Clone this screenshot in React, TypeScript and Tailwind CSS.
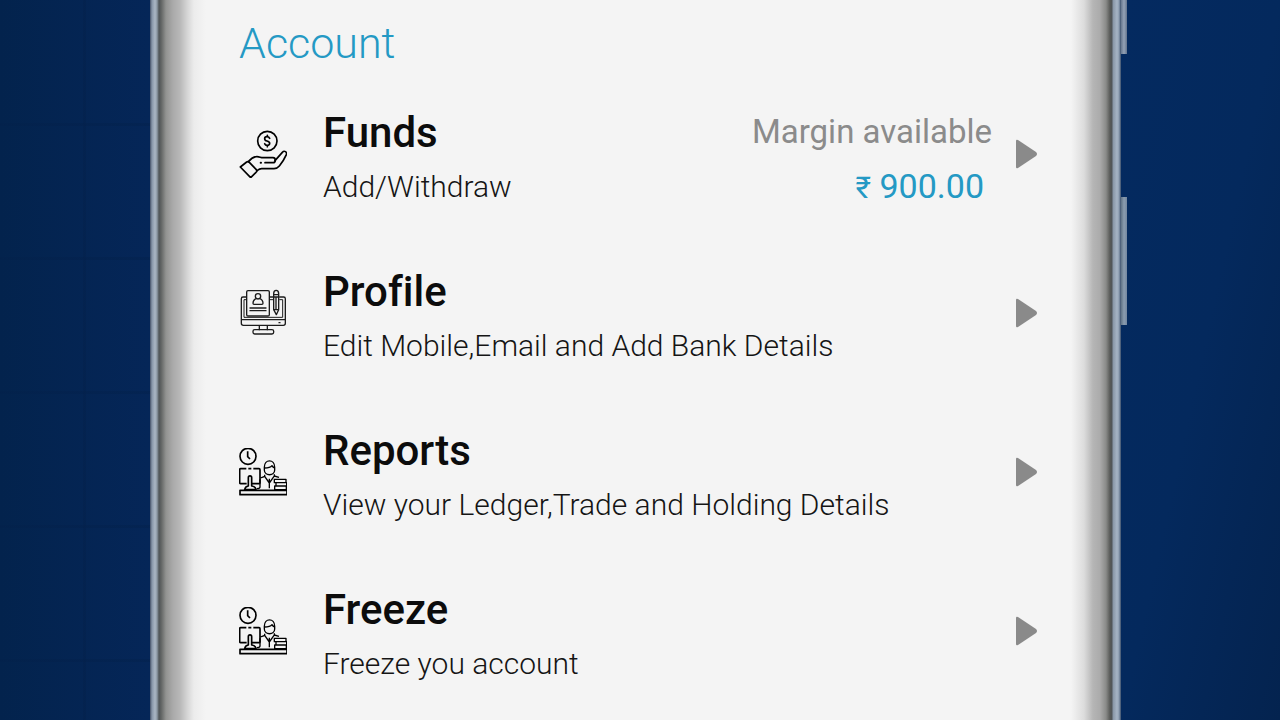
import React from 'react';

interface AccountItem {
  id: string;
  title: string;
  detail: string;
  icon: React.ReactNode;
  margin?: string;
}

const HandCoinIcon = () => (
  <svg viewBox="42 42 144 144" className="size-12 shrink-0" fill="none" stroke="currentColor" strokeWidth="5" strokeLinecap="round" strokeLinejoin="round" aria-hidden="true">
    <circle cx="127" cy="75" r="29" />
    <path d="M134 67c-2-4-5-5-8-5-4 0-7 2-7 6s3 6 7 7 8 3 8 7-3 6-7 6-7-2-8-5M127 58v4M127 88v4" />
    <path d="M65 138 46 153l31 32 16-16c3-2 3-5 1-8L73 139c-2-2-5-3-8-1Z" />
    <path d="M70 137c7-8 13-14 24-15 8-1 13 3 19 3h31c9 0 9 15 0 15h-24" />
    <path d="m150 134 22-25c6-7 15-1 12 7-6 14-13 24-21 34-5 6-10 8-16 8h-37c-6 0-10 3-14 6" />
    <path d="M107 140h1" strokeWidth="6" />
  </svg>
);

const ProfileIcon = () => (
  <svg viewBox="42 38 144 144" className="size-12 shrink-0" fill="none" stroke="#1c1c1c" strokeWidth="4" strokeLinecap="round" strokeLinejoin="round" aria-hidden="true">
    <path d="M64 62H54c-3 0-5 2-5 5v74c0 4 3 6 6 6h120c4 0 6-3 6-6V67c0-3-2-5-5-5h-12M145 62h-11M49 130h132" />
    <path d="M64 70h-7v53h116V70h-9M145 70h-11" strokeWidth="3" />
    <rect x="65" y="43" width="68" height="76" rx="4" fill="#f4f4f4" />
    <circle cx="99" cy="60" r="8" />
    <path d="M94 67c-6 2-10 7-10 14 0 2 1 3 3 3h24c2 0 3-1 3-3 0-7-4-12-10-14" />
    <path d="M75 95h48M75 103h48" />
    <path d="M146 52c0-13 15-13 15 0v48l-7 15-8-15V52ZM146 55h15M146 62h15M153 65v33M146 100h15" fill="#f4f4f4" />
    <path d="M103 148v12M127 148v12M162 139h3" />
    <rect x="84" y="160" width="62" height="13" rx="5" />
  </svg>
);

const DeskIcon = () => (
  <svg viewBox="42 36 144 144" className="size-12 shrink-0" fill="none" stroke="currentColor" strokeWidth="5" strokeLinejoin="round" aria-hidden="true">
    <circle cx="69" cy="61" r="24" />
    <path d="M68 46v16l7 7" />
    <path d="M64 98H47c-2 0-3 1-3 3v39c0 2 1 3 3 3h18M80 143h22c2 0 3-1 3-3v-39c0-2-1-3-3-3H85M70 98h9" />
    <path d="M70 150v-25c0-7 10-7 10 0v25c8 1 12 4 13 11H59c1-7 4-10 11-11Z" />
    <rect x="45" y="163" width="141" height="13" />
    <path d="M118 94c0-26 31-26 31 0v8c0 19-31 19-31 0v-8ZM119 96c12 0 17-1 22-7 2 4 4 6 8 7" strokeWidth="4" />
    <path d="M106 126c3-2 8-2 13-5v-5M148 115v5l14 4M119 121l14 20 14-20M133 128v29M105 130v23c0 5-4 5-10 5" strokeWidth="4" />
    <path d="M148 130h35v10h-35zM153 140h32v10h-32zM149 150h35v11h-35z" strokeWidth="4" />
  </svg>
);

const items: AccountItem[] = [
  { id: 'funds', title: 'Funds', detail: 'Add/Withdraw', icon: <HandCoinIcon />, margin: '900.00' },
  { id: 'profile', title: 'Profile', detail: 'Edit Mobile,Email and Add Bank Details', icon: <ProfileIcon /> },
  { id: 'reports', title: 'Reports', detail: 'View your Ledger,Trade and Holding Details', icon: <DeskIcon /> },
  { id: 'freeze', title: 'Freeze', detail: 'Freeze you account', icon: <DeskIcon /> },
];

const AccountRow: React.FC<{ item: AccountItem }> = ({ item }) => (
  <li>
    <button type="button" className="flex h-[159px] w-full items-center text-left">
      {item.icon}
      <span className="ml-9 flex flex-1 flex-col gap-3 whitespace-nowrap pt-1.5">
        <span className="text-[42px] font-medium leading-[48px] text-[#0c0c0c] [font-variant-ligatures:none]">{item.title}</span>
        <span className="text-[30px] font-light leading-9 text-[#151515]">{item.detail}</span>
      </span>
      {item.margin && (
        <span className="mr-6 flex flex-col items-end gap-3 whitespace-nowrap pt-3">
          <span className="text-[33px] leading-[42px] text-[#8b8b8b]">Margin available</span>
          <span className="pr-2 text-[34px] leading-[42px] text-[#2499c4]">
            <span className="text-[30px]">₹</span> {item.margin}
          </span>
        </span>
      )}
      <svg viewBox="0 0 22 30" className="h-[30px] w-[22px] shrink-0" fill="#8a8a8a" aria-hidden="true">
        <path d="M0 2Q0 0 2 1L20 13Q22 15 20 17L2 29Q0 30 0 28Z" />
      </svg>
    </button>
  </li>
);

export default function App() {
  return (
    <div className="grid min-h-screen grid-cols-[150px_1fr_159px] overflow-hidden bg-[#04265a] font-['Roboto','Noto_Sans',sans-serif]">
      <div className="bg-[linear-gradient(90deg,transparent_83px,#03204a66_83px,#03204a66_86px,transparent_86px),repeating-linear-gradient(180deg,transparent_0px,transparent_123px,#03204a66_123px,#03204a66_126px,transparent_126px,transparent_134px),linear-gradient(90deg,#03234d,#052658)]" />

      <div className="relative flex bg-[#f4f4f4]">
        <div className="w-14 shrink-0 bg-[linear-gradient(90deg,#435067_0px,#8795a8_2px,#aab6c4_5px,#8d99a5_7px,#505558_9px,#606362_11px,#929391_16px,#aaaaaa_23px,#b8b8b8_30px,#d8d8d8_38px,#ececec_44px,#f4f4f4_56px)]" />
        <main className="min-w-0 flex-1 px-[33px]">
          <h1 className="pb-[7px] pt-[19px] text-[43px] font-light leading-[48px] text-[#2499c4]">Account</h1>
          <ul>
            {items.map((item) => (
              <AccountRow key={item.id} item={item} />
            ))}
          </ul>
        </main>
        <div className="w-[50px] shrink-0 bg-[linear-gradient(270deg,#3b4f6b_0px,#8c9cb0_2px,#a6b4c5_4px,#8795a6_8px,#505559_9px,#585a58_11px,#8a8b89_15px,#ababab_21px,#b5b5b5_28px,#dcdcdc_37px,#f4f4f4_50px)]" />

        {/* side keys */}
        <div className="absolute left-full top-0 h-[54px] w-1.5 bg-linear-to-r from-[#66778e] via-[#94a2b6] to-[#64758e]" />
        <div className="absolute left-full top-[197px] h-32 w-1.5 bg-linear-to-r from-[#5f7285] via-[#8a9caf] to-[#7487a0]" />
      </div>

      <div className="bg-linear-to-br from-[#042a60] via-[#04295d] to-[#04234f]" />
    </div>
  );
}
